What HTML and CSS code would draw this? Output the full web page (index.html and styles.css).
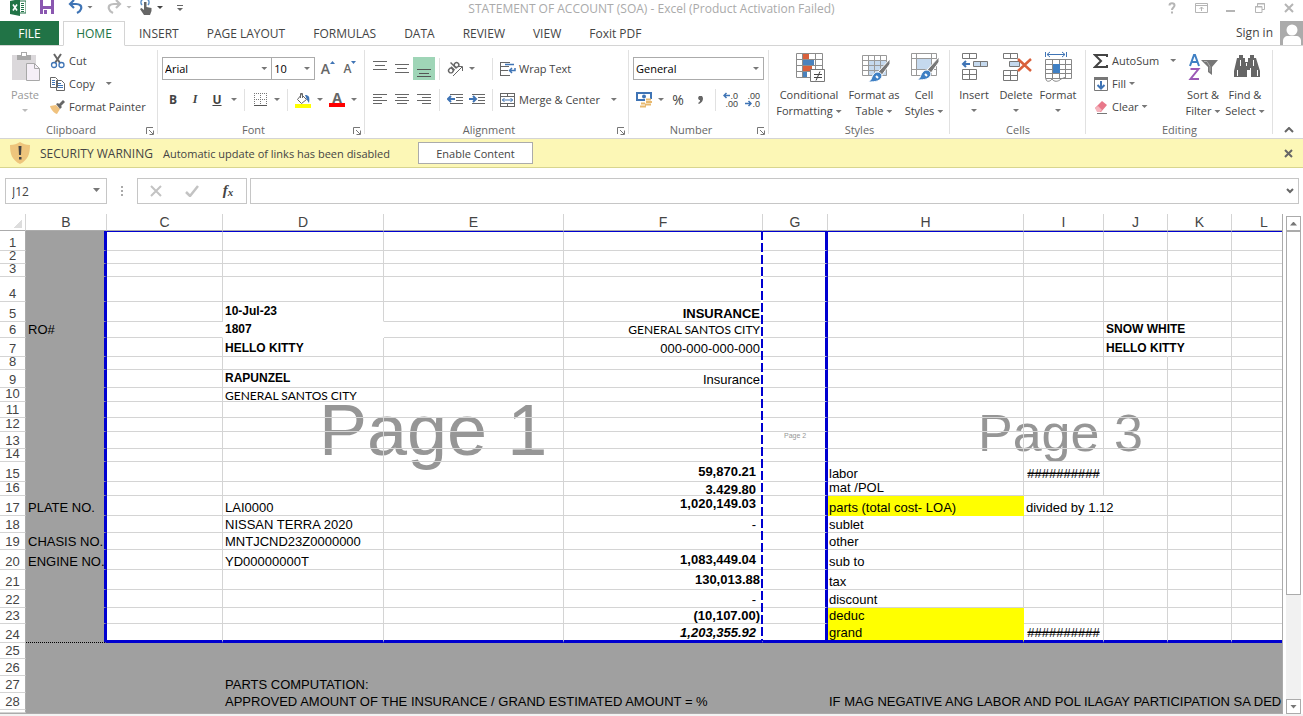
FILE: index.html
```html
<!DOCTYPE html>
<html lang="en">
<head>
    <meta charset="UTF-8">
    <meta name="viewport" content="width=device-width, initial-scale=1.0">
    <title>STATEMENT OF ACCOUNT (SOA) - Excel</title>
    <link rel="stylesheet" href="styles.css">
</head>
<body>
    <header class="titlebar">
        <div class="quick">
            <svg width="16" height="16" viewBox="0 0 16 16"><path d="M9 1h7v12H9z" fill="#fff" stroke="#217346"/><path d="M11 3.500h3M11 5.500h3M11 7.500h3M11 9.500h3M11 11.500h3" stroke="#217346"/><path d="M0 1l10-2v17L0 14z" fill="#217346"/><path d="M3 4.500l4 6M7 4.500l-4 6" stroke="#fff" stroke-width="1.600"/></svg>
            <button class="qb" aria-label="Save"><svg width="14" height="14" viewBox="0 0 14 14"><path d="M0 0h14v14H0z" fill="#8a57b0"/><path d="M3 0h8v6H3z" fill="#fff"/><path d="M3 9h8v5H3z" fill="#fff"/><path d="M4 10h3v4H4z" fill="#8a57b0"/></svg></button>
            <button class="qb" aria-label="Undo"><svg width="15" height="14" viewBox="0 0 15 14"><path d="M2 4h6c4 0 6 2 5 5c-.5 2-2 3-4 4M6 0L2 4l4 4" fill="none" stroke="#3f74b5" stroke-width="2.200"/></svg><i class="arrow"></i></button>
            <button class="qb" aria-label="Redo"><svg width="15" height="14" viewBox="0 0 15 14"><path d="M13 4H7C3 4 1 6 2 9c.5 2 2 3 4 4M9 0l4 4l-4 4" fill="none" stroke="#bdbdbd" stroke-width="2.200"/></svg><i class="arrow pale"></i></button>
            <button class="qb touch" aria-label="Touch mode"><svg width="13" height="15" viewBox="0 0 13 15"><path d="M2 5a4 4 0 1 1 6 0" fill="none" stroke="#5b8fc7" stroke-width="1.500"/><path d="M4 2h2.500v5l5 1v3l-1.500 4H4L0 9l1.500-1L4 10z" fill="#666"/></svg><i class="arrow dark"></i></button>
            <button class="qb last" aria-label="Customize"><svg width="6" height="7" viewBox="0 0 6 7"><path d="M0 1.500h6" stroke="#666"/><path d="M0 4h6L3 7z" fill="#666"/></svg></button>
        </div>
        <div class="title">STATEMENT OF ACCOUNT (SOA) - Excel (Product Activation Failed)</div>
        <div class="window">
            <button aria-label="Help"><svg width="12" height="12" viewBox="0 0 12 12"><path d="M3.500 3.500c0-3 5-3 5 0c0 2-2.500 2-2.500 4.500M6 9.500v2" fill="none" stroke="#b5b5b5" stroke-width="2"/></svg></button>
            <button aria-label="Ribbon options"><svg width="13" height="12" viewBox="0 0 13 12"><path d="M.5 1.500h12v9H.5zM.5 3.500h12M6.500 9V5M4.500 7l2-2l2 2" fill="none" stroke="#b5b5b5"/></svg></button>
            <button aria-label="Minimize"><svg width="12" height="12" viewBox="0 0 12 12"><path d="M1 9h9" stroke="#b5b5b5" stroke-width="2"/></svg></button>
            <button aria-label="Restore"><svg width="12" height="12" viewBox="0 0 12 12"><path d="M3.500 4V1.500h7v6H8M1.500 4.500H8v6H1.500zM3 2h8M1 5h7" fill="none" stroke="#b5b5b5"/></svg></button>
            <button aria-label="Close"><svg width="12" height="12" viewBox="0 0 12 12"><path d="M2 2l8 8M10 2l-8 8" stroke="#b5b5b5" stroke-width="2"/></svg></button>
        </div>
    </header>

    <nav class="tabs">
        <button class="tab file">FILE</button>
        <button class="tab active">HOME</button>
        <button class="tab">INSERT</button>
        <button class="tab">PAGE LAYOUT</button>
        <button class="tab">FORMULAS</button>
        <button class="tab">DATA</button>
        <button class="tab">REVIEW</button>
        <button class="tab">VIEW</button>
        <button class="tab">Foxit PDF</button>
        <a class="signin" href="#">Sign in</a>
        <svg class="avatar" width="23" height="24" viewBox="0 0 23 24"><path d="M0 0h23v24H0z" fill="#ababab"/><circle cx="12" cy="9" r="5.500" fill="#fff"/><path d="M3 24v-4c0-3 2-5 5-5h8c3 0 5 2 5 5v4z" fill="#fff"/></svg>
    </nav>

    <div class="ribbon">
        <section class="group clipboard">
            <div class="body">
                <button class="big disabled">
                    <svg width="32" height="32" viewBox="0 0 32 32"><path d="M3 4h24v25H3z" fill="#dbd8db"/><path d="M8 9V4h4V1h6v3h4v5z" fill="#a8a8a8"/><path d="M13 2h4v3h-4z" fill="#fff"/><path d="M17.500 12.500h8l5 5v12h-13z" fill="#f5eff7" stroke="#a8a8a8"/><path d="M25.500 12.500v5h5" fill="none" stroke="#a8a8a8"/></svg>
                    <span>Paste</span><i class="arrow pale"></i>
                </button>
                <div class="small-list">
                    <button class="small"><svg width="16" height="16" viewBox="0 0 16 16"><path d="M4 1l6 9M11 1L5 10" stroke="#666" stroke-width="2"/><circle cx="4" cy="12" r="2.500" fill="none" stroke="#3f74b5" stroke-width="1.300"/><circle cx="11.500" cy="12" r="2.500" fill="none" stroke="#3f74b5" stroke-width="1.300"/></svg>Cut</button>
                    <button class="small"><svg width="16" height="16" viewBox="0 0 16 16"><path d="M.5 1.500h5l2 2v8h-7zM6.500 4.500h5l3 3v7h-8z" fill="#fff" stroke="#666"/><path d="M2 4.500h3M2 6.500h3M2 8.500h3M8 7.500h3M8 9.500h5M8 11.500h5" stroke="#3f74b5"/></svg>Copy<i class="arrow"></i></button>
                    <button class="small"><svg width="16" height="16" viewBox="0 0 16 16"><path d="M0 7l6-1l4 4l-3 5c-2 0-6-4-7-8z" fill="#f0c27e"/><path d="M6 5l2-1l1 1l4-4l2 2l-4 4l1 1l-2 2z" fill="#666"/></svg>Format Painter</button>
                </div>
            </div>
            <div class="label more">Clipboard<button class="launch" aria-label="Clipboard settings"><svg width="8" height="8" viewBox="0 0 8 8"><path d="M.5 7V.5H7M3 3l4 4M7.500 3.500v4h-4" fill="none" stroke="#777"/></svg></button></div>
        </section>

        <section class="group font">
            <div class="body rows">
                <div class="row">
                    <span class="drop w-font"><select aria-label="Font"><option>Arial</option></select></span>
                    <span class="drop w-size"><select aria-label="Font size"><option>10</option></select></span>
                    <button class="ib grow" aria-label="Increase font size"><b>A</b><svg width="5" height="3" viewBox="0 0 5 3"><path d="M0 3h5L2.500 0z" fill="#3f74b5"/></svg></button>
                    <button class="ib shrink" aria-label="Decrease font size"><b>A</b><svg width="5" height="3" viewBox="0 0 5 3"><path d="M0 0h5L2.500 3z" fill="#3f74b5"/></svg></button>
                </div>
                <div class="row">
                    <button class="ib bold">B</button>
                    <button class="ib italic">I</button>
                    <button class="ib underline">U</button><i class="arrow"></i>
                    <i class="sep"></i>
                    <button class="ib" aria-label="Borders"><svg width="13" height="13" viewBox="0 0 13 13"><path d="M0 .5h13M0 6.500h13M.5 0v12M6.500 0v12M12.500 0v12" stroke="#777" stroke-dasharray="1 1"/><path d="M0 12.500h13" stroke="#555"/></svg></button><i class="arrow"></i>
                    <i class="sep"></i>
                    <button class="ib" aria-label="Fill color"><svg width="16" height="16" viewBox="0 0 16 16"><path d="M6.500 2.500l5 5l-5 4l-4-4z" fill="#fff" stroke="#666"/><path d="M5.500 6V1.500h2V6" fill="none" stroke="#666"/><path d="M10 3c4 0 5 2 4 8l-2-3z" fill="#3f74b5"/><path d="M0 12h16v4H0z" fill="#ff0"/></svg></button><i class="arrow"></i>
                    <button class="ib fontcolor" aria-label="Font color"><b>A</b></button><i class="arrow"></i>
                </div>
            </div>
            <div class="label more">Font<button class="launch" aria-label="Font settings"><svg width="8" height="8" viewBox="0 0 8 8"><path d="M.5 7V.5H7M3 3l4 4M7.500 3.500v4h-4" fill="none" stroke="#777"/></svg></button></div>
        </section>

        <section class="group alignment">
            <div class="body rows">
                <div class="row">
                    <button class="ib" aria-label="Top align"><svg width="14" height="16" viewBox="0 0 14 16"><path d="M0 .5h14M2 4.500h10M0 8.500h14" stroke="#666"/></svg></button>
                    <button class="ib" aria-label="Middle align"><svg width="14" height="16" viewBox="0 0 14 16"><path d="M0 3.500h14M2 7.500h10M0 11.500h14" stroke="#666"/></svg></button>
                    <button class="ib on" aria-label="Bottom align"><svg width="14" height="16" viewBox="0 0 14 16"><path d="M0 8.500h14M2 12.500h10M0 15.500h14" stroke="#555"/></svg></button>
                    <i class="sep"></i>
                    <button class="ib" aria-label="Orientation"><svg width="18" height="18" viewBox="0 0 18 18"><g fill="none" stroke="#666" stroke-width="1.400" transform="rotate(-45 7 7)"><circle cx="3" cy="8" r="2.300"/><path d="M5.800 5.500v5M8.500 2v8.500"/><circle cx="11" cy="8" r="2.300"/></g><path d="M7 16l9-9M12 6.500h4.500V11" fill="none" stroke="#666"/></svg></button><i class="arrow"></i>
                    <i class="sep far"></i>
                    <button class="small wide"><svg width="16" height="16" viewBox="0 0 16 16"><path d="M0 1.500h10M0 5.500h9M0 9.500h8M0 14.500h10M.5 1v14" stroke="#666"/><path d="M5 3.500h9M15 7v2.500H10M12 7l-2.500 2.500L12 12" fill="none" stroke="#3f74b5" stroke-width="1.500"/></svg>Wrap Text</button>
                </div>
                <div class="row">
                    <button class="ib" aria-label="Align left"><svg width="14" height="14" viewBox="0 0 14 14"><path d="M0 1.500h14M0 4.500h9M0 7.500h14M0 10.500h9" stroke="#666"/></svg></button>
                    <button class="ib" aria-label="Center"><svg width="14" height="14" viewBox="0 0 14 14"><path d="M0 1.500h14M2 4.500h10M0 7.500h14M2 10.500h10" stroke="#666"/></svg></button>
                    <button class="ib" aria-label="Align right"><svg width="14" height="14" viewBox="0 0 14 14"><path d="M0 1.500h14M5 4.500h9M0 7.500h14M5 10.500h9" stroke="#666"/></svg></button>
                    <i class="sep"></i>
                    <button class="ib" aria-label="Decrease indent"><svg width="16" height="14" viewBox="0 0 16 14"><path d="M3 1.500h13M9 4.500h7M9 7.500h7M3 10.500h13" stroke="#666"/><path d="M1 6h7M4 3L1 6l3 3" fill="none" stroke="#3f74b5" stroke-width="2"/></svg></button>
                    <button class="ib" aria-label="Increase indent"><svg width="16" height="14" viewBox="0 0 16 14"><path d="M3 1.500h13M9 4.500h7M9 7.500h7M3 10.500h13" stroke="#666"/><path d="M0 6h7M4 3l3 3l-3 3" fill="none" stroke="#3f74b5" stroke-width="2"/></svg></button>
                    <i class="sep"></i>
                    <button class="small wide"><svg width="16" height="16" viewBox="0 0 16 16"><path d="M.5 1v14M14.500 1v14M0 1.500h15M0 4.500h15M0 11.500h15M0 14.500h15M7.500 1v3M7.500 12v3" stroke="#666"/><path d="M2 8h11M4.500 6l-2 2l2 2M10.500 6l2 2l-2 2" fill="none" stroke="#3f74b5"/></svg>Merge &amp; Center<i class="arrow"></i></button>
                </div>
            </div>
            <div class="label more">Alignment<button class="launch" aria-label="Alignment settings"><svg width="8" height="8" viewBox="0 0 8 8"><path d="M.5 7V.5H7M3 3l4 4M7.500 3.500v4h-4" fill="none" stroke="#777"/></svg></button></div>
        </section>

        <section class="group number">
            <div class="body rows">
                <div class="row"><span class="drop w-format"><select aria-label="Number format"><option>General</option></select></span></div>
                <div class="row">
                    <button class="ib" aria-label="Accounting format"><svg width="16" height="16" viewBox="0 0 16 16"><path d="M1 1h14v7H1z" fill="#fff" stroke="#3f74b5" stroke-width="2"/><circle cx="8" cy="4.500" r="2" fill="#3f74b5"/><path d="M9 7h7v8H9zM4 10h6v6H4z" fill="#fff"/><path d="M10 7.500h5M10 10h6M9 12.500h6M5 11.500h4M4 14.500h6" stroke="#e8b96f" stroke-width="1.800"/></svg></button><i class="arrow"></i>
                    <button class="ib percent">%</button>
                    <button class="ib comma" aria-label="Comma style"><svg width="5" height="8" viewBox="0 0 5 8"><path d="M1 0h3l1 2c0 3-1 4-4 6l-1-1c2-1 2-2 2-3H1L0 2z" fill="#666"/></svg></button>
                    <i class="sep"></i>
                    <button class="ib dec" aria-label="Increase decimal"><span><svg width="7" height="7" viewBox="0 0 7 7"><path d="M1 3.500h6M3.500 1L1 3.500L3.500 6" fill="none" stroke="#3f74b5" stroke-width="1.500"/></svg>.0</span><span>.00</span></button>
                    <button class="ib dec" aria-label="Decrease decimal"><span>.00</span><span><svg width="7" height="7" viewBox="0 0 7 7"><path d="M0 3.500h6M3.500 1L6 3.500L3.500 6" fill="none" stroke="#3f74b5" stroke-width="1.500"/></svg>.0</span></button>
                </div>
            </div>
            <div class="label more">Number<button class="launch" aria-label="Number settings"><svg width="8" height="8" viewBox="0 0 8 8"><path d="M.5 7V.5H7M3 3l4 4M7.500 3.500v4h-4" fill="none" stroke="#777"/></svg></button></div>
        </section>

        <section class="group styles">
            <div class="body">
                <button class="big cond">
                    <svg width="32" height="32" viewBox="0 0 32 32"><path d="M3.500 2.500h26v24h-26z" fill="#fff"/><path d="M10 3h6v5h-6zM10 15h9v5h-9z" fill="#d9603b"/><path d="M10 9h11v5H10zM10 21h4v5h-4z" fill="#4a82bd"/><path d="M3.500 2.500h26v24h-26zM3.500 8.500h26M3.500 14.500h26M3.500 20.500h26M9.500 2.500v24M22.500 2.500v24" fill="none" stroke="#8c8c8c"/><path d="M17.500 18.500h14v12h-14z" fill="#fff" stroke="#777"/><path d="M21 23.500h8M21 26.500h8M27 20.500l-4 9" stroke="#444"/></svg>
                    <span>Conditional<br>Formatting<i class="arrow"></i></span>
                </button>
                <button class="big fmt">
                    <svg width="32" height="32" viewBox="0 0 32 32"><path d="M10 9h19v16H10z" fill="#c5d9ee"/><path d="M4.500 4.500h24v20h-24zM4.500 9.500h24M4.500 14.500h24M4.500 19.500h24M10.500 4.500v20M16.500 4.500v20M22.500 4.500v20" fill="none" stroke="#999"/><path d="M32 8v5l-8 11l-4-3z" fill="#777" stroke="#fff"/><path d="M20 21c2 0 4 2 4 4c-1 5-6 6-14 6c4-2 3-4 5-7c1-2 3-3 5-3z" fill="#3f80c4" stroke="#fff"/><path d="M18 25l2 2" stroke="#fff" stroke-width="2"/></svg>
                    <span>Format as<br>Table<i class="arrow"></i></span>
                </button>
                <button class="big cell">
                    <svg width="32" height="32" viewBox="0 0 32 32"><path d="M3.500 2.500h25v22h-25z" fill="#fff" stroke="#999"/><path d="M9 8h14v10H9z" fill="#c5d9ee"/><path d="M3.500 7.500h25M3.500 18.500h25M8.500 2.500v22M23.500 2.500v22" stroke="#999"/><path d="M31 6v5l-8 11l-4-3z" fill="#777" stroke="#fff"/><path d="M19 19c2 0 4 2 4 4c-1 5-6 6-14 6c4-2 3-4 5-7c1-2 3-3 5-3z" fill="#3f80c4" stroke="#fff"/><path d="M17 23l2 2" stroke="#fff" stroke-width="2"/></svg>
                    <span>Cell<br>Styles<i class="arrow"></i></span>
                </button>
            </div>
            <div class="label">Styles</div>
        </section>

        <section class="group cells">
            <div class="body">
                <button class="big">
                    <svg width="32" height="32" viewBox="0 0 32 32"><path d="M4.500 2.500h14v5h-14zM11.500 2.500v5M4.500 18.500h14v10h-14zM4.500 23.500h14M11.500 18.500v10" fill="#fff" stroke="#777"/><path d="M15.500 10.500h14v5h-14zM22.500 10.500v5" fill="#c5d9ee" stroke="#777"/><path d="M5 13h7M8 10l-3 3l3 3" fill="none" stroke="#3f74b5" stroke-width="2"/></svg>
                    <span>Insert</span><i class="arrow"></i>
                </button>
                <button class="big">
                    <svg width="32" height="32" viewBox="0 0 32 32"><path d="M3.500 2.500h14v5h-14zM10.500 2.500v5M3.500 19.500h14v10h-14zM3.500 24.500h14M10.500 19.500v10" fill="#fff" stroke="#777"/><path d="M9.500 10.500h10v5h-10z" fill="#c5d9ee" stroke="#777"/><path d="M18 8l13 12M31 8L18 20" stroke="#d9603b" stroke-width="2.500"/></svg>
                    <span>Delete</span><i class="arrow"></i>
                </button>
                <button class="big">
                    <svg width="32" height="32" viewBox="0 0 32 32"><path d="M3.500 8.500h26v19h-26zM3.500 13.500h26M3.500 22.500h26M10.500 8.500v19M17.500 8.500v19M23.500 8.500v19M3.500 18.500h26" fill="#fff" stroke="#888"/><path d="M11 13h7v9h-7z" fill="#3f80c4"/><path d="M4 28c0 3 4 3 6 0c2 3 6 3 9 0l5-2" fill="none" stroke="#888"/><path d="M3.500 1v5M24.500 1v5M5 3.500h18M8 1L5 3.500L8 6M20 1l3 2.500L20 6" fill="none" stroke="#3f74b5"/></svg>
                    <span>Format</span><i class="arrow"></i>
                </button>
            </div>
            <div class="label">Cells</div>
        </section>

        <section class="group editing">
            <div class="body">
                <div class="small-list">
                    <button class="small auto"><svg width="16" height="16" viewBox="0 0 16 16"><path d="M14 4V2H2l6 6l-6 6h12v-2" fill="none" stroke="#444" stroke-width="2"/></svg>AutoSum<i class="arrow"></i></button>
                    <button class="small"><svg width="16" height="16" viewBox="0 0 16 16"><path d="M1.500 1.500h13v13h-13z" fill="#fff" stroke="#777"/><path d="M1 1h14v3H1z" fill="#777"/><path d="M8 5v8M4.500 9L8 12.500L11.500 9" fill="none" stroke="#3f74b5" stroke-width="2"/></svg>Fill<i class="arrow near"></i></button>
                    <button class="small"><svg width="16" height="16" viewBox="0 0 16 16"><path d="M2 9l7-7l5 4l-6 7H5z" fill="#e8788a"/><path d="M2 9l3-2l4 4l-2 2H4z" fill="#f5b5be"/><path d="M4 14.500h10" stroke="#777"/></svg>Clear<i class="arrow near"></i></button>
                </div>
                <button class="big sort">
                    <svg width="32" height="32" viewBox="0 0 32 32"><path d="M3 15L7 4h1l4 11M4.500 11h6" fill="none" stroke="#3f80c4" stroke-width="2"/><path d="M3.500 18h8l-8 10h8.500" fill="none" stroke="#9b59b6" stroke-width="2"/><path d="M14 9h17l-6 7v8l-4-3v-5z" fill="#777"/><path d="M17 10.500h3l3 5v5" fill="none" stroke="#aaa"/></svg>
                    <span>Sort &amp;<br>Filter<i class="arrow"></i></span>
                </button>
                <button class="big">
                    <svg width="32" height="32" viewBox="0 0 32 32"><path d="M10 4h4v3h2v4h3V7h2V4h4v3h2l4 13v6h-9v-9h-4v9H5v-6L8 7h2z" fill="#666"/><path d="M14 15h7v4h-7z" fill="#666"/><path d="M11.500 9v6M24.500 9v6M8.500 19v6M28.500 19v6M17.500 12v3" stroke="#fff"/></svg>
                    <span>Find &amp;<br>Select<i class="arrow"></i></span>
                </button>
            </div>
            <div class="label">Editing</div>
        </section>
        <button class="collapse" aria-label="Collapse ribbon"><svg width="10" height="6" viewBox="0 0 10 6"><path d="M1 5l4-4l4 4" fill="none" stroke="#666" stroke-width="2"/></svg></button>
    </div>

    <div class="message">
        <svg width="20" height="22" viewBox="0 0 20 22"><path d="M10 0c3 2 6 3 10 3c0 9-2 15-10 19C2 18 0 12 0 3c4 0 7-1 10-3z" fill="#eec57c"/><path d="M8.500 4h3l-.5 9H9zM9 15h2.500v2.500H9z" fill="#444"/></svg>
        <span class="warning">SECURITY WARNING</span>
        <span class="reason">Automatic update of links has been disabled</span>
        <button class="enable">Enable Content</button>
        <button class="dismiss" aria-label="Close message"><svg width="9" height="9" viewBox="0 0 9 9"><path d="M1 1l7 7M8 1L1 8" stroke="#666" stroke-width="2"/></svg></button>
    </div>

    <div class="formula">
        <span class="drop namebox"><input type="text" aria-label="Name box" value="J12"></span>
        <i class="dots"></i>
        <div class="entry">
            <button aria-label="Cancel"><svg width="12" height="12" viewBox="0 0 12 12"><path d="M1 1l10 10M11 1L1 11" stroke="#c3c3c3" stroke-width="2"/></svg></button>
            <button aria-label="Enter"><svg width="14" height="12" viewBox="0 0 14 12"><path d="M1 7l4 4l8-10" fill="none" stroke="#c3c3c3" stroke-width="2.500"/></svg></button>
            <button class="fx" aria-label="Insert function">f<small>x</small></button>
        </div>
        <div class="fbox">
            <input type="text" aria-label="Formula bar">
            <svg width="8" height="6" viewBox="0 0 8 6"><path d="M1 1l3 3l3-3" fill="none" stroke="#666" stroke-width="2"/></svg>
        </div>
    </div>

    <main class="workspace">
        <div class="sheet">
            <div class="mark page1">Page 1</div>
            <div class="mark page2">Page 2</div>
            <div class="mark page3">Page 3</div>
            <div class="pagebreak"></div>
            <table>
                <colgroup><col class="c-n"><col class="c-b"><col class="c-c"><col class="c-d"><col class="c-e"><col class="c-f"><col class="c-g"><col class="c-h"><col class="c-i"><col class="c-j"><col class="c-j"><col></colgroup>
                <thead>
                    <tr><th class="corner"></th><th>B</th><th>C</th><th>D</th><th>E</th><th>F</th><th>G</th><th>H</th><th>I</th><th>J</th><th>K</th><th class="cut">L</th></tr>
                </thead>
                <tbody class="print">
                    <tr class="h20 first"><th><div>1</div></th><td></td><td></td><td></td><td></td><td></td><td></td><td></td><td></td><td></td><td></td><td></td></tr>
                    <tr class="h13"><th><div>2</div></th><td></td><td></td><td></td><td></td><td></td><td></td><td></td><td></td><td></td><td></td><td></td></tr>
                    <tr class="h13"><th><div>3</div></th><td></td><td></td><td></td><td></td><td></td><td></td><td></td><td></td><td></td><td></td><td></td></tr>
                    <tr class="h25"><th><div>4</div></th><td></td><td></td><td></td><td></td><td></td><td></td><td></td><td></td><td></td><td></td><td></td></tr>
                    <tr class="h20"><th><div>5</div></th><td></td><td></td><td class="name mid nb"><div>10-Jul-23</div></td><td></td><td class="num strong"><div>INSURANCE</div></td><td></td><td></td><td></td><td></td><td></td><td></td></tr>
                    <tr class="h16"><th><div>6</div></th><td><div>RO#</div></td><td class="nr"></td><td class="name nb nr"><div>1807</div></td><td></td><td class="num gothic"><div>GENERAL SANTOS CITY</div></td><td></td><td></td><td></td><td class="name nr"><div>SNOW WHITE</div></td><td></td><td></td></tr>
                    <tr class="h19"><th><div>7</div></th><td></td><td></td><td class="name"><div>HELLO KITTY</div></td><td></td><td class="num"><div>000-000-000-000</div></td><td></td><td></td><td></td><td class="name nr"><div>HELLO KITTY</div></td><td></td><td></td></tr>
                    <tr class="h13"><th><div>8</div></th><td></td><td></td><td></td><td></td><td></td><td></td><td></td><td></td><td></td><td></td><td></td></tr>
                    <tr class="h18"><th><div>9</div></th><td></td><td></td><td class="name mid"><div>RAPUNZEL</div></td><td></td><td class="num"><div>Insurance</div></td><td></td><td></td><td></td><td></td><td></td><td></td></tr>
                    <tr class="h14"><th><div>10</div></th><td></td><td></td><td class="gothic low"><div>GENERAL SANTOS CITY</div></td><td></td><td></td><td></td><td></td><td></td><td></td><td></td><td></td></tr>
                    <tr class="h16"><th><div>11</div></th><td></td><td></td><td></td><td></td><td></td><td></td><td></td><td></td><td></td><td></td><td></td></tr>
                    <tr class="h14"><th><div>12</div></th><td></td><td></td><td></td><td></td><td></td><td></td><td></td><td></td><td></td><td></td><td></td></tr>
                    <tr class="h17"><th><div>13</div></th><td></td><td></td><td></td><td></td><td></td><td></td><td></td><td></td><td></td><td></td><td></td></tr>
                    <tr class="h13"><th><div>14</div></th><td></td><td></td><td></td><td></td><td></td><td></td><td></td><td></td><td></td><td></td><td></td></tr>
                    <tr class="h20"><th><div>15</div></th><td></td><td></td><td></td><td></td><td class="num strong in mid"><div>59,870.21</div></td><td></td><td><div>labor</div></td><td class="hash"><div>##########</div></td><td></td><td></td><td></td></tr>
                    <tr class="h14"><th><div>16</div></th><td></td><td></td><td></td><td></td><td class="num strong in low"><div>3.429.80</div></td><td></td><td><div>mat /POL</div></td><td></td><td></td><td></td><td></td></tr>
                    <tr class="h20"><th><div>17</div></th><td><div>PLATE NO.</div></td><td></td><td><div>LAI0000</div></td><td></td><td class="num strong in low"><div>1,020,149.03</div></td><td></td><td class="yellow"><div>parts (total cost- LOA)</div></td><td class="nr"><div>divided by 1.12</div></td><td></td><td></td><td></td></tr>
                    <tr class="h17"><th><div>18</div></th><td></td><td></td><td><div>NISSAN TERRA 2020</div></td><td></td><td class="num in"><div>-</div></td><td></td><td><div>sublet</div></td><td></td><td></td><td></td><td></td></tr>
                    <tr class="h17"><th><div>19</div></th><td><div>CHASIS NO.</div></td><td></td><td><div>MNTJCND23Z0000000</div></td><td></td><td></td><td></td><td><div>other</div></td><td></td><td></td><td></td><td></td></tr>
                    <tr class="h20"><th><div>20</div></th><td><div>ENGINE NO.</div></td><td></td><td><div>YD00000000T</div></td><td></td><td class="num strong in mid"><div>1,083,449.04</div></td><td></td><td><div>sub to</div></td><td></td><td></td><td></td><td></td></tr>
                    <tr class="h20"><th><div>21</div></th><td></td><td></td><td></td><td></td><td class="num strong mid"><div>130,013.88</div></td><td></td><td><div>tax</div></td><td></td><td></td><td></td><td></td></tr>
                    <tr class="h18"><th><div>22</div></th><td></td><td></td><td></td><td></td><td class="num in"><div>-</div></td><td></td><td><div>discount</div></td><td></td><td></td><td></td><td></td></tr>
                    <tr class="h16"><th><div>23</div></th><td></td><td></td><td></td><td></td><td class="num strong"><div>(10,107.00)</div></td><td></td><td class="yellow"><div>deduc</div></td><td></td><td></td><td></td><td></td></tr>
                    <tr class="h19 last"><th><div>24</div></th><td></td><td></td><td></td><td></td><td class="num strong in slant"><div>1,203,355.92</div></td><td></td><td class="yellow"><div>grand</div></td><td class="hash"><div>##########</div></td><td></td><td></td><td></td></tr>
                </tbody>
                <tbody class="outside">
                    <tr class="h16"><th><div>25</div></th><td></td><td></td><td></td><td></td><td></td><td></td><td></td><td></td><td></td><td></td><td></td></tr>
                    <tr class="h17"><th><div>26</div></th><td></td><td></td><td></td><td></td><td></td><td></td><td></td><td></td><td></td><td></td><td></td></tr>
                    <tr class="h17"><th><div>27</div></th><td></td><td></td><td><div>PARTS COMPUTATION:</div></td><td></td><td></td><td></td><td></td><td></td><td></td><td></td><td></td></tr>
                    <tr class="h17"><th><div>28</div></th><td></td><td></td><td><div>APPROVED AMOUNT OF THE INSURANCE / GRAND ESTIMATED AMOUNT = %</div></td><td></td><td></td><td></td><td><div>IF MAG NEGATIVE ANG LABOR AND POL ILAGAY PARTICIPATION SA DED</div></td><td></td><td></td><td></td><td></td></tr>
                    <tr class="h3"><th></th><td></td><td></td><td></td><td></td><td></td><td></td><td></td><td></td><td></td><td></td><td></td></tr>
                </tbody>
            </table>
        </div>
        <div class="scroll">
            <button class="up" aria-label="Scroll up"></button>
            <div class="thumb"></div>
            <div class="track"></div>
            <button class="down" aria-label="Scroll down"></button>
        </div>
    </main>
</body>
</html>
```
FILE: styles.css
```css
* {
    box-sizing: border-box;
}
body, html {
    margin: 0;
    padding: 0;
}
body {
    min-height: 100vh;
    overflow: hidden;
    background-color: #f3f3f3;
    color: #444444;
    font-family: "Segoe UI", "Open Sans", "Noto Sans", sans-serif;
    font-size: 11px;
}
button {
    padding: 0;
    border: none;
    background: none;
    color: inherit;
    font: inherit;
    cursor: pointer;
}
svg {
    display: block;
    flex-shrink: 0;
}
.titlebar,
.tabs,
.ribbon,
.formula,
.workspace {
    background-color: #ffffff;
}
.arrow {
    display: inline-block;
    flex-shrink: 0;
    width: 6px;
    height: 3px;
    background-color: #777777;
    clip-path: polygon(0 0, 100% 0, 50% 100%);
}
.arrow.pale {
    background-color: #bbbbbb;
}
.arrow.dark {
    background-color: #444444;
}

/* title bar */
.titlebar {
    display: grid;
    grid-template-columns: 1fr auto 1fr;
    height: 21px;
    overflow: hidden;
}
.quick {
    display: flex;
    align-items: flex-start;
    padding-left: 10px;
}
.qb {
    display: flex;
    align-items: center;
    gap: 4px;
    margin-left: 14px;
}
.qb.touch {
    margin-left: 8px;
}
.qb.last {
    margin: 4px 0 0 14px;
}
.title {
    color: #aaaaaa;
    font-size: 12px;
    line-height: 17px;
}
.window {
    display: flex;
    justify-content: flex-end;
    gap: 17px;
    padding-right: 8px;
    height: 15px;
}

/* ribbon tabs */
.tabs {
    display: flex;
    align-items: flex-end;
    height: 25px;
    border-bottom: 1px solid #d4d4d4;
    font-size: 12px;
}
.tab {
    height: 24px;
    margin-right: 4px;
    padding: 0 12px;
}
.tab.file {
    width: 59px;
    background-color: #217346;
    color: #ffffff;
}
.tab.active {
    width: 62px;
    height: 25px;
    margin-right: 2px;
    margin-bottom: -1px;
    border: 1px solid #d4d4d4;
    border-bottom-color: #ffffff;
    color: #217346;
}
.signin {
    margin-left: auto;
    margin-right: 7px;
    color: #444444;
    line-height: 24px;
    text-decoration: none;
}

/* ribbon */
.ribbon {
    display: flex;
    height: 93px;
    border-bottom: 1px solid #d4d4d4;
}
.group {
    display: flex;
    flex-direction: column;
    margin-top: 3px;
    background: linear-gradient(#e1e1e1, #e1e1e1) right 1px / 1px 84px no-repeat;
}
.body {
    display: flex;
    flex: 1;
}
.rows {
    flex-direction: column;
    gap: 8px;
    padding: 8px 4px 0;
}
.row {
    display: flex;
    align-items: center;
    height: 23px;
}
.label {
    position: relative;
    height: 15px;
    color: #666666;
    line-height: 13px;
    text-align: center;
}
.label.more {
    padding-right: 16px;
}
.launch {
    position: absolute;
    right: 4px;
    top: 4px;
}
.clipboard { width: 158px; }
.font { width: 207px; }
.alignment { width: 264px; }
.number { width: 140px; }
.styles { width: 181px; }
.cells { width: 136px; }
.editing { width: 187px; }
.styles .body,
.cells .body {
    padding-left: 3px;
}
.big {
    display: flex;
    flex-direction: column;
    align-items: center;
    width: 42px;
    padding-top: 2px;
    line-height: 16px;
}
.big svg {
    margin-bottom: 4px;
}
.big .arrow {
    margin: 6px 0;
}
.big span .arrow {
    margin: 0 0 2px 3px;
}
.big.cond { width: 74px; }
.big.fmt { width: 56px; }
.big.cell { width: 44px; }
.big.disabled {
    width: 50px;
    color: #999999;
}
.small-list {
    display: flex;
    flex-direction: column;
    align-items: flex-start;
}
.editing .small-list {
    width: 96px;
    padding-left: 7px;
}
.small {
    display: flex;
    align-items: center;
    gap: 3px;
    height: 23px;
    white-space: nowrap;
}
.small .arrow {
    margin-left: 8px;
}
.small .arrow.near {
    margin-left: 0;
}
.small.wide {
    margin-left: 3px;
}
.ib {
    display: flex;
    align-items: center;
    justify-content: center;
    flex-shrink: 0;
    width: 22px;
    height: 23px;
}
.ib + .arrow {
    margin: 0 3px;
}
.ib.on {
    background-color: #9fd5b7;
}
.sep {
    flex-shrink: 0;
    width: 1px;
    height: 22px;
    margin: 0 4px;
    background-color: #e1e1e1;
}
.sep.far {
    margin-left: 14px;
}
.bold,
.italic,
.underline {
    font-size: 12px;
    font-weight: bold;
}
.italic {
    font-family: "Liberation Serif", serif;
    font-style: italic;
}
.underline {
    text-decoration: underline;
}
.grow {
    margin-left: 2px;
    font-size: 14px;
}
.shrink {
    font-size: 12px;
}
.grow b,
.shrink b {
    color: #666666;
    font-weight: 600;
}
.grow svg,
.shrink svg {
    margin-bottom: 12px;
}
.fontcolor b {
    width: 16px;
    height: 15px;
    border-bottom: 4px solid #ff0000;
    color: #666666;
    font-size: 14px;
    line-height: 11px;
}
.percent {
    font-size: 14px;
}
.dec {
    flex-direction: column;
    align-items: flex-end;
    padding-right: 4px;
    font-family: "Liberation Sans", sans-serif;
    font-size: 9px;
    line-height: 8px;
}
.dec span {
    display: flex;
}
.collapse {
    align-self: flex-end;
    margin: 0 0 5px 11px;
}
.drop {
    position: relative;
    display: block;
    height: 23px;
    border: 1px solid #ababab;
}
.drop::after {
    content: "";
    position: absolute;
    right: 4px;
    top: 9px;
    width: 6px;
    height: 3px;
    background-color: #777777;
    clip-path: polygon(0 0, 100% 0, 50% 100%);
    pointer-events: none;
}
.drop select,
.drop input {
    width: 100%;
    height: 100%;
    padding: 0 2px;
    border: none;
    background: none;
    color: #000000;
    font: inherit;
    appearance: none;
    outline: none;
}
.w-font { width: 111px; }
.w-size { width: 44px; margin-left: -1px; }
.w-format { width: 131px; }

/* message bar */
.message {
    display: flex;
    align-items: center;
    height: 29px;
    padding: 0 10px;
    border-bottom: 1px solid #d8d58f;
    background-color: #fcf7b6;
}
.warning {
    width: 113px;
    margin: 0 10px;
    font-size: 12px;
    white-space: nowrap;
}
.reason {
    width: 234px;
}
.enable {
    width: 115px;
    height: 22px;
    margin-left: 21px;
    border: 1px solid #ababab;
    background-color: #ffffff;
}
.dismiss {
    margin-left: auto;
}

/* formula bar */
.formula {
    display: flex;
    height: 46px;
    padding: 10px 4px 10px 5px;
}
.namebox {
    width: 102px;
    height: 26px;
    border-color: #c6c6c6;
    font-size: 12px;
}
.namebox::after {
    right: 6px;
    width: 7px;
    height: 4px;
}
.namebox input {
    padding-left: 6px;
    color: #444444;
}
.dots {
    width: 2px;
    height: 10px;
    margin: 8px 14px;
    background: repeating-linear-gradient(#aaaaaa 0 2px, transparent 2px 4px);
}
.entry,
.fbox {
    display: flex;
    align-items: center;
    border: 1px solid #c6c6c6;
}
.entry {
    width: 110px;
    margin-right: 3px;
}
.entry button {
    display: flex;
    justify-content: center;
    width: 36px;
}
.fx {
    font-family: "Liberation Serif", serif;
    font-size: 15px;
    font-style: italic;
    font-weight: bold;
    line-height: 16px;
}
.fx small {
    margin-top: 2px;
    font-size: 11px;
}
.fbox {
    flex: 1;
    padding-right: 4px;
}
.fbox input {
    flex: 1;
    border: none;
    outline: none;
}

/* worksheet */
.workspace {
    display: flex;
}
.sheet {
    position: relative;
    z-index: 0;
    flex: 1;
    min-width: 0;
    overflow: hidden;
    border-right: 1px solid #ababab;
    border-bottom: 1px solid #ababab;
}
table {
    width: 100%;
    table-layout: fixed;
    border-collapse: separate;
    border-spacing: 0;
    color: #000000;
    font-family: Arial, "Liberation Sans", sans-serif;
    font-size: 13px;
    line-height: 15px;
}
.c-n { width: 26px; }
.c-b { width: 81px; }
.c-c { width: 116px; }
.c-d { width: 161px; }
.c-e { width: 180px; }
.c-f { width: 199px; }
.c-g { width: 65px; }
.c-h { width: 196px; }
.c-i { width: 80px; }
.c-j { width: 64px; }
th {
    padding: 0;
    color: #444444;
    font-weight: normal;
}
thead th {
    height: 17px;
    border-right: 1px solid #d4d4d4;
    border-bottom: 1px solid #ababab;
    background-color: #ffffff;
    font-size: 14px;
    line-height: 16px;
}
thead .corner {
    background: linear-gradient(135deg, transparent 50%, #dddddd 50%) 13px 5px / 9px 9px no-repeat;
}
thead .cut {
    padding-left: 28px;
    border-right: none;
    text-align: left;
}
tbody th,
td {
    height: var(--h);
    padding: 0;
    border-bottom: 1px solid #d4d4d4;
    border-right: 1px solid #d4d4d4;
    vertical-align: bottom;
}
tbody th {
    border-right-color: #ababab;
}
td:last-child {
    border-right: none;
}
tbody div {
    display: flex;
    align-items: flex-end;
    height: calc(var(--h) - 1px);
    padding: 0 2px;
    overflow-x: visible;
    overflow-y: clip;
    white-space: nowrap;
}
tbody th div {
    justify-content: center;
}
.h3 { --h: 3px; }
.h13 { --h: 13px; }
.h14 { --h: 14px; }
.h16 { --h: 16px; }
.h17 { --h: 17px; }
.h18 { --h: 18px; }
.h19 { --h: 19px; }
.h20 { --h: 20px; }
.h25 { --h: 25px; }
.print td:nth-child(2) {
    border-right: 3px solid #0000d0;
    border-bottom-color: #a0a0a0;
    background-color: #a0a0a0;
}
.print td:nth-child(7) {
    border-right: 3px solid #0000d0;
}
td:nth-child(8) div {
    padding-left: 1px;
}
.first td:nth-child(n+3) {
    border-top: 1px solid #0000d0;
}
.last td:nth-child(n+3) {
    border-bottom: 3px solid #0000d0;
}
.last td div {
    height: calc(var(--h) - 3px);
}
.print .last td:nth-child(2) {
    border-bottom: 1px dotted #000000;
}
.outside td {
    border-color: #a0a0a0;
    background-color: #a0a0a0;
}
.nr {
    border-right-color: #ffffff;
}
.nb {
    border-bottom-color: #ffffff;
}
.print .yellow {
    border-right-color: #ffff00;
    background-color: #ffff00;
}
.print tr:not(.last) .yellow {
    border-bottom-color: #ffff00;
}
.name {
    font-size: 12px;
    font-weight: bold;
}
.gothic {
    font-family: "Century Gothic", Lato, sans-serif;
    font-size: 12px;
}
.strong {
    font-weight: bold;
}
.slant {
    font-style: italic;
}
.num div {
    justify-content: flex-end;
}
.in div {
    padding-right: 6px;
}
.mid div {
    align-items: center;
}
.low div {
    align-items: flex-start;
}
.hash div {
    justify-content: center;
    text-decoration: line-through;
}
.mark {
    position: absolute;
    z-index: -1;
    color: #969696;
    font-family: Arial, "Liberation Sans", sans-serif;
    line-height: 1;
    white-space: nowrap;
}
.page1 {
    left: 319px;
    top: 180px;
    font-size: 72px;
}
.page2 {
    left: 784px;
    top: 218px;
    font-size: 7px;
}
.page3 {
    left: 978px;
    top: 193px;
    font-size: 52px;
}
.pagebreak {
    position: absolute;
    left: 761px;
    top: 17px;
    width: 2px;
    height: 410px;
    background: repeating-linear-gradient(#0000d0 0 9px, #ffffff 9px 12px);
}

/* vertical scroll bar */
.scroll {
    display: flex;
    flex-direction: column;
    width: 20px;
    padding: 2px 2px 0 3px;
}
.scroll button {
    height: 15px;
    border: 1px solid #ababab;
}
.scroll button::before {
    content: "";
    display: block;
    width: 7px;
    height: 4px;
    margin: 0 auto;
    background-color: #777777;
    clip-path: polygon(0 0, 100% 0, 50% 100%);
}
.scroll .up::before {
    clip-path: polygon(0 100%, 100% 100%, 50% 0);
}
.thumb {
    flex: 364;
    border: 1px solid #ababab;
}
.track {
    flex: 104;
    background-color: #f1f1f1;
}
```
